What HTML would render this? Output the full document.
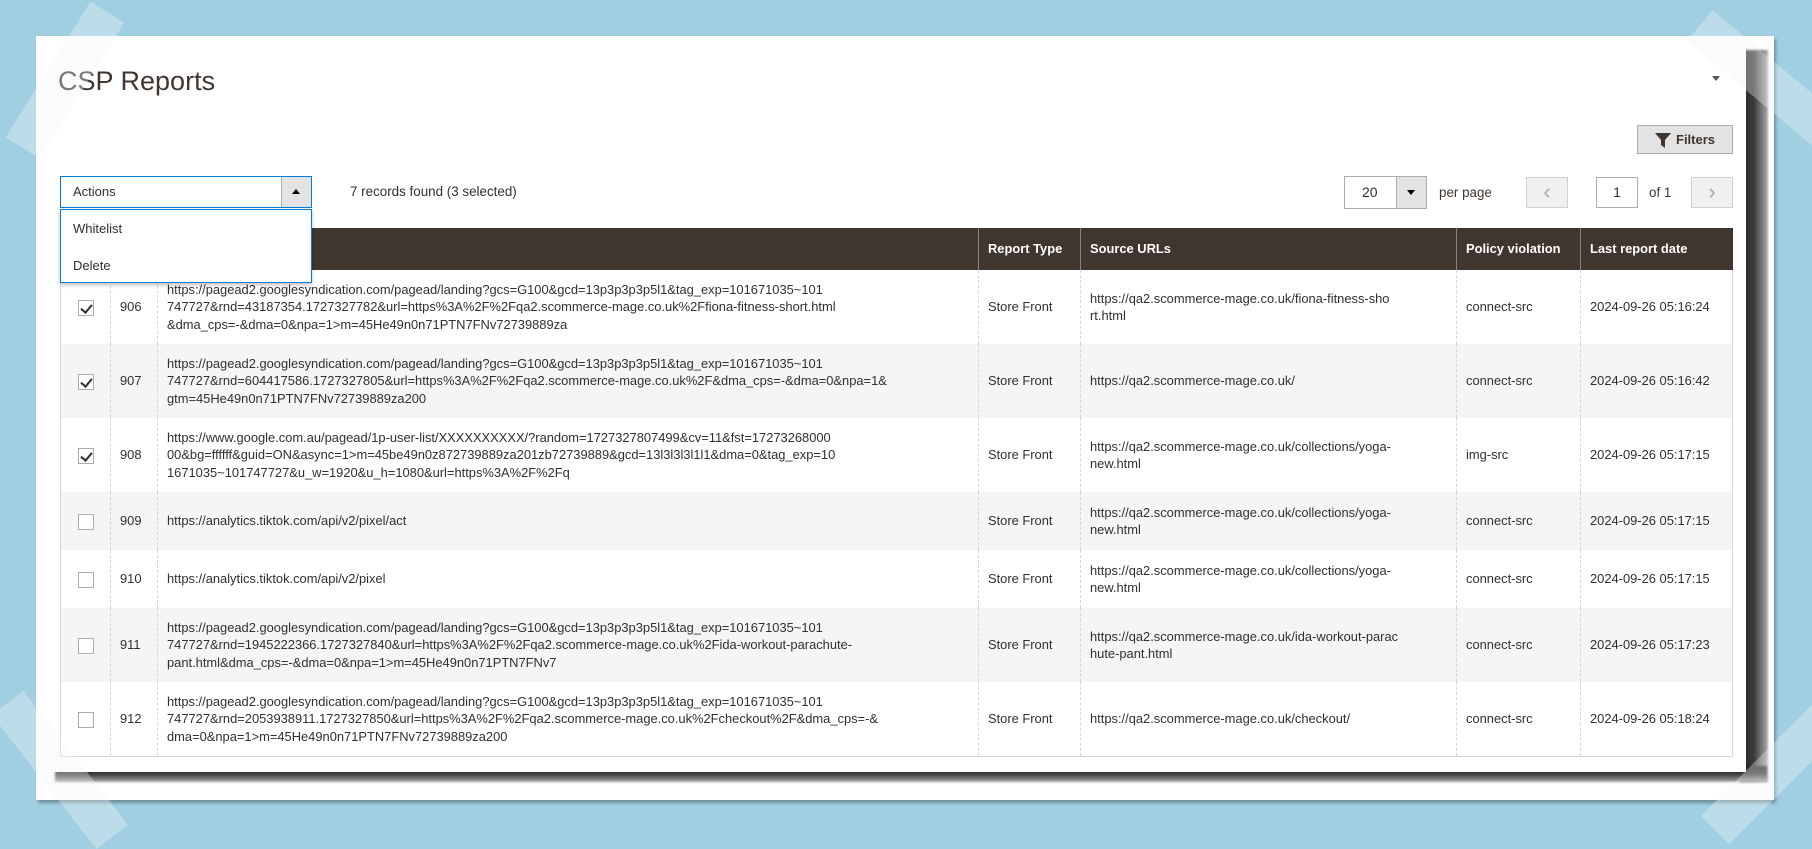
<!DOCTYPE html>
<html><head><meta charset="utf-8"><style>
*{box-sizing:border-box;margin:0;padding:0}
body{width:1812px;height:838px;background:#9fcfe0;position:relative;overflow:hidden;font-family:"Liberation Sans",Arial,sans-serif;color:#303030}
.outer{position:absolute;left:36px;top:36px;width:1738px;height:764px;background:#fff;box-shadow:2px 3px 3px rgba(0,0,0,.3)}
.shR{position:absolute;left:1740px;top:50px;width:28px;height:732px;background:linear-gradient(90deg,#222,#3a3a3a 50%,#aaa);filter:blur(1px)}
.shB{position:absolute;left:55px;top:766px;width:1712px;height:16px;background:linear-gradient(180deg,#222,#3a3a3a 50%,#aaa);filter:blur(1px)}
.page{position:absolute;left:36px;top:36px;width:1710px;height:736px;background:#fff}
h1{position:absolute;left:58px;top:66px;font-weight:400;font-size:27px;color:#41362f}
.sel{position:absolute;left:60px;top:176px;width:252px;height:32px;border:1px solid #007bdb;font-size:13px;padding:7px 12px;background:#fff}
.sel .arr{position:absolute;right:0;top:0;width:30px;height:30px;background:#e3e3e3;border-left:1px solid #adadad}
.sel .arr:after{content:"";position:absolute;left:10px;top:12px;border:4px solid transparent;border-bottom:5px solid #000;border-top:0}
.menu{position:absolute;z-index:5;left:60px;top:209px;width:252px;height:74px;border:1px solid #007bdb;background:#fff;box-shadow:0 2px 4px rgba(0,0,0,.25);font-size:13px}
.menu div{padding:11px 12px 0;height:37px}
.rec{position:absolute;left:350px;top:184px;font-size:13.4px}
.filt{position:absolute;left:1637px;top:125px;width:96px;height:29px;background:#e3e3e3;border:1px solid #adadad;font-size:13px;font-weight:bold;color:#41362f;padding:6px 0 0 38px}
.filt svg{position:absolute;left:17px;top:7px}
.pp{position:absolute;left:1344px;top:176px;width:83px;height:33px;border:1px solid #adadad;font-size:14px;padding:7px 0 0 17px;background:#fff}
.pp .arr{position:absolute;right:0;top:0;width:30px;height:31px;background:#e3e3e3;border-left:1px solid #adadad}
.pp .arr:after{content:"";position:absolute;left:10px;top:13px;border:4px solid transparent;border-top:5px solid #000;border-bottom:0}
.t13{position:absolute;font-size:13.4px;color:#41362f}
.nb{position:absolute;top:177px;width:42px;height:31px;background:#f0f0f0;border:1px solid #d1d1d1;color:#aaa;font-size:22px;text-align:center;line-height:27px}
.pin{position:absolute;left:1596px;top:177px;width:42px;height:31px;border:1px solid #adadad;font-size:14px;text-align:center;line-height:29px}
table{position:absolute;left:60px;top:228px;width:1673px;border-collapse:collapse;table-layout:fixed;font-size:12.9px;line-height:17.5px;color:#303030}
th{background:#41362f;color:#fff;text-align:left;font-weight:bold;height:42px;padding:0 9px;border-left:1px solid #8a837f;font-size:12.9px}
th:first-child{border-left:0}
td{padding:0 9px;border-left:1px dashed #d6d6d6;vertical-align:middle}
td:first-child{border-left:1px solid #d6d6d6;text-align:center}
td:last-child{border-right:1px solid #d6d6d6}
tr.g td{background:#f5f5f5}
tbody tr:last-child td{border-bottom:1px solid #d6d6d6}
.cb{display:inline-block;width:16px;height:16px;border:1px solid #adadad;background:#fff;position:relative;vertical-align:middle}
.cb.c:after{content:"";position:absolute;left:4px;top:1px;width:5px;height:9px;border:solid #303030;border-width:0 2px 2px 0;transform:rotate(40deg)}
.tape{position:absolute;background:rgba(240,244,245,.35);z-index:6}
</style></head><body>
<div class="outer"></div>
<div class="shR"></div><div class="shB"></div>
<div class="page"></div>
<h1>CSP Reports</h1>
<div style="position:absolute;left:1712px;top:76px;border:4px solid transparent;border-top:5px solid #555"></div>
<div class="filt"><svg width="16" height="15" viewBox="0 0 16 15"><path d="M0 0H16L10 7V15L6 12V7Z" fill="#41362f"/></svg>Filters</div>
<div class="sel">Actions<div class="arr"></div></div>
<div class="menu"><div>Whitelist</div><div>Delete</div></div>
<div class="rec">7 records found (3 selected)</div>
<div class="pp">20<div class="arr"></div></div>
<div class="t13" style="left:1439px;top:185px">per page</div>
<div class="nb" style="left:1526px">&#8249;</div>
<div class="pin">1</div>
<div class="t13" style="left:1649px;top:185px">of 1</div>
<div class="nb" style="left:1691px">&#8250;</div>
<table>
<colgroup><col style="width:50px"><col style="width:47px"><col style="width:821px"><col style="width:102px"><col style="width:376px"><col style="width:124px"><col></colgroup>
<thead><tr><th></th><th></th><th></th><th>Report Type</th><th>Source URLs</th><th>Policy violation</th><th>Last report date</th></tr></thead>
<tbody>
<tr style="height:74px"><td><span class="cb c"></span></td><td>906</td><td>https://pagead2.googlesyndication.com/pagead/landing?gcs=G100&amp;gcd=13p3p3p3p5l1&amp;tag_exp=101671035~101<br>747727&amp;rnd=43187354.1727327782&amp;url=https%3A%2F%2Fqa2.scommerce-mage.co.uk%2Ffiona-fitness-short.html<br>&amp;dma_cps=-&amp;dma=0&amp;npa=1&gt;m=45He49n0n71PTN7FNv72739889za</td><td>Store Front</td><td>https://qa2.scommerce-mage.co.uk/fiona-fitness-sho<br>rt.html</td><td>connect-src</td><td>2024-09-26 05:16:24</td></tr>
<tr class="g" style="height:74px"><td><span class="cb c"></span></td><td>907</td><td>https://pagead2.googlesyndication.com/pagead/landing?gcs=G100&amp;gcd=13p3p3p3p5l1&amp;tag_exp=101671035~101<br>747727&amp;rnd=604417586.1727327805&amp;url=https%3A%2F%2Fqa2.scommerce-mage.co.uk%2F&amp;dma_cps=-&amp;dma=0&amp;npa=1&amp;<br>gtm=45He49n0n71PTN7FNv72739889za200</td><td>Store Front</td><td>https://qa2.scommerce-mage.co.uk/</td><td>connect-src</td><td>2024-09-26 05:16:42</td></tr>
<tr style="height:74px"><td><span class="cb c"></span></td><td>908</td><td>https://www.google.com.au/pagead/1p-user-list/XXXXXXXXXX/?random=1727327807499&amp;cv=11&amp;fst=17273268000<br>00&amp;bg=ffffff&amp;guid=ON&amp;async=1&gt;m=45be49n0z872739889za201zb72739889&amp;gcd=13l3l3l3l1l1&amp;dma=0&amp;tag_exp=10<br>1671035~101747727&amp;u_w=1920&amp;u_h=1080&amp;url=https%3A%2F%2Fq</td><td>Store Front</td><td>https://qa2.scommerce-mage.co.uk/collections/yoga-<br>new.html</td><td>img-src</td><td>2024-09-26 05:17:15</td></tr>
<tr class="g" style="height:58px"><td><span class="cb"></span></td><td>909</td><td>https://analytics.tiktok.com/api/v2/pixel/act</td><td>Store Front</td><td>https://qa2.scommerce-mage.co.uk/collections/yoga-<br>new.html</td><td>connect-src</td><td>2024-09-26 05:17:15</td></tr>
<tr style="height:58px"><td><span class="cb"></span></td><td>910</td><td>https://analytics.tiktok.com/api/v2/pixel</td><td>Store Front</td><td>https://qa2.scommerce-mage.co.uk/collections/yoga-<br>new.html</td><td>connect-src</td><td>2024-09-26 05:17:15</td></tr>
<tr class="g" style="height:74px"><td><span class="cb"></span></td><td>911</td><td>https://pagead2.googlesyndication.com/pagead/landing?gcs=G100&amp;gcd=13p3p3p3p5l1&amp;tag_exp=101671035~101<br>747727&amp;rnd=1945222366.1727327840&amp;url=https%3A%2F%2Fqa2.scommerce-mage.co.uk%2Fida-workout-parachute-<br>pant.html&amp;dma_cps=-&amp;dma=0&amp;npa=1&gt;m=45He49n0n71PTN7FNv7</td><td>Store Front</td><td>https://qa2.scommerce-mage.co.uk/ida-workout-parac<br>hute-pant.html</td><td>connect-src</td><td>2024-09-26 05:17:23</td></tr>
<tr style="height:74px"><td><span class="cb"></span></td><td>912</td><td>https://pagead2.googlesyndication.com/pagead/landing?gcs=G100&amp;gcd=13p3p3p3p5l1&amp;tag_exp=101671035~101<br>747727&amp;rnd=2053938911.1727327850&amp;url=https%3A%2F%2Fqa2.scommerce-mage.co.uk%2Fcheckout%2F&amp;dma_cps=-&amp;<br>dma=0&amp;npa=1&gt;m=45He49n0n71PTN7FNv72739889za200</td><td>Store Front</td><td>https://qa2.scommerce-mage.co.uk/checkout/</td><td>connect-src</td><td>2024-09-26 05:18:24</td></tr>
</tbody></table>
<div class="tape" style="left:-15px;top:60px;width:160px;height:40px;transform:rotate(-58deg)"></div>
<div class="tape" style="left:1680px;top:60px;width:170px;height:40px;transform:rotate(40deg)"></div>
<div class="tape" style="left:-25px;top:750px;width:170px;height:40px;transform:rotate(52deg)"></div>
<div class="tape" style="left:1690px;top:750px;width:170px;height:40px;transform:rotate(-45deg)"></div>
</body></html>
